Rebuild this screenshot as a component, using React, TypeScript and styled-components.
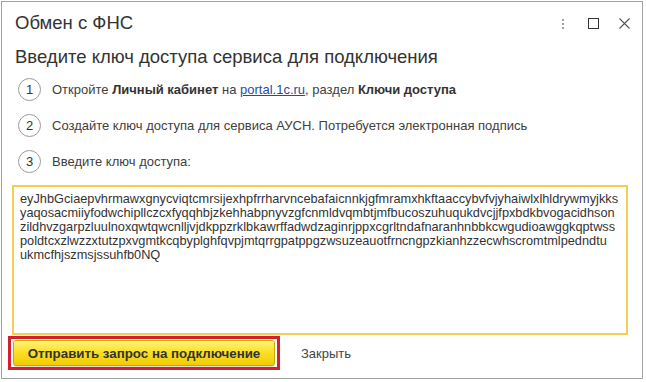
import React from 'react';
import styled, { createGlobalStyle } from 'styled-components';

const GlobalStyle = createGlobalStyle`
  html, body {
    margin: 0;
    padding: 0;
    background: #ffffff;
    font-family: Arial, "Liberation Sans", sans-serif;
  }
  #root {
    padding: 1px 0 0 1px;
  }
`;

const keyLines = [
  'eyJhbGciaepvhrmawxgnycviqtcmrsijexhpfrrharvncebafaicnnkjgfmramxhkftaaccybvfvjyhaiwlxlhldrywmyjkks',
  'yaqosacmiiyfodwchipllczcxfyqqhbjzkehhabpnyvzgfcnmldvqmbtjmfbucoszuhuqukdvcjjfpxbdkbvogacidhson',
  'zildhvzgarpzluulnoxqwtqwcnlljvjdkppzrklbkawrffadwdzaginrjppxcgrltndafnaranhnbbkcwgudioawggkqptwss',
  'poldtcxzlwzzxtutzpxvgmtkcqbyplghfqvpjmtqrrgpatppgzwsuzeauotfrncngpzkianhzzecwhscromtmlpedndtu',
  'ukmcfhjszmsjssuhfb0NQ',
];

const App: React.FC = () => {
  return (
    <>
      <GlobalStyle />
      <Window>
        <TitleBar>
          <Title>Обмен с ФНС</Title>
          <TitleActions>
            <IconButton>
              <svg width="4" height="12" viewBox="0 0 4 12">
                <circle cx="2" cy="2" r="1.1" fill="#8a8a8a" />
                <circle cx="2" cy="6" r="1.1" fill="#8a8a8a" />
                <circle cx="2" cy="10" r="1.1" fill="#8a8a8a" />
              </svg>
            </IconButton>
            <IconButton>
              <svg width="11" height="11" viewBox="0 0 11 11">
                <rect x="0.5" y="0.5" width="10" height="10" fill="none" stroke="#333" strokeWidth="1" />
              </svg>
            </IconButton>
            <IconButton>
              <svg width="11" height="11" viewBox="0 0 11 11">
                <path d="M0.5 0.5 L10.5 10.5 M10.5 0.5 L0.5 10.5" stroke="#555" strokeWidth="1.1" />
              </svg>
            </IconButton>
          </TitleActions>
        </TitleBar>

        <Content>
          <Heading>Введите ключ доступа сервиса для подключения</Heading>

          <Steps>
            <Step>
              <StepNumber>1</StepNumber>
              <StepText>
                Откройте <b>Личный кабинет</b> на <Link href="#">portal.1c.ru</Link>, раздел{' '}
                <b>Ключи доступа</b>
              </StepText>
            </Step>
            <Step>
              <StepNumber>2</StepNumber>
              <StepText>
                Создайте ключ доступа для сервиса АУСН. Потребуется электронная подпись
              </StepText>
            </Step>
            <Step>
              <StepNumber>3</StepNumber>
              <StepText>Введите ключ доступа:</StepText>
            </Step>
          </Steps>

          <KeyBox>
            {keyLines.map((line) => (
              <KeyLine key={line}>{line}</KeyLine>
            ))}
          </KeyBox>

          <Footer>
            <Highlight>
              <PrimaryButton>Отправить запрос на подключение</PrimaryButton>
            </Highlight>
            <PlainButton>Закрыть</PlainButton>
          </Footer>
        </Content>
      </Window>
    </>
  );
};

const Window = styled.div`
  width: 642px;
  height: 378px;
  border: 1px solid #a3a3a3;
  background: #fff;
  display: flex;
  flex-direction: column;
  box-sizing: border-box;
  color: #333;
`;

const TitleBar = styled.div`
  display: flex;
  align-items: center;
  justify-content: space-between;
  height: 40px;
  padding: 0 12px 0 13px;
  flex-shrink: 0;
`;

const Title = styled.div`
  font-size: 18.5px;
  color: #333;
  margin-top: 2px;
`;

const TitleActions = styled.div`
  display: flex;
  align-items: center;
  gap: 20px;
  margin-top: 3px;
`;

const IconButton = styled.span`
  display: flex;
  align-items: center;
  justify-content: center;
  width: 11px;
  height: 12px;
`;

const Content = styled.div`
  display: flex;
  flex-direction: column;
  padding: 0 14px 0 10px;
`;

const Heading = styled.div`
  font-size: 18.5px;
  color: #333;
  padding-left: 3px;
  height: 30px;
  line-height: 30px;
`;

const Steps = styled.div`
  display: flex;
  flex-direction: column;
  gap: 13px;
  padding-left: 6px;
  margin-top: 6px;
`;

const Step = styled.div`
  display: flex;
  align-items: center;
  gap: 11px;
  height: 23px;
`;

const StepNumber = styled.span`
  width: 21px;
  height: 21px;
  border: 1px solid #9a9a9a;
  border-radius: 50%;
  display: flex;
  align-items: center;
  justify-content: center;
  font-size: 13px;
  color: #333;
  flex-shrink: 0;
`;

const StepText = styled.span`
  font-size: 13px;
  color: #404040;

  b {
    color: #333;
  }
`;

const Link = styled.a`
  color: #1f4da0;
  text-decoration: underline;
`;

const KeyBox = styled.div`
  margin-top: 12px;
  height: 150px;
  border: 2px solid #f0d04e;
  box-sizing: border-box;
  padding: 5px 6px;
  font-size: 12.75px;
  line-height: 14px;
  color: #333;
  overflow: hidden;
`;

const KeyLine = styled.div`
  white-space: nowrap;
`;

const Footer = styled.div`
  display: flex;
  align-items: center;
  gap: 21px;
  margin-top: 1px;
  margin-left: -4px;
`;

const Highlight = styled.div`
  border: 3px solid #d3202e;
  padding: 1px 2px;
  display: flex;
`;

const PrimaryButton = styled.button`
  width: 262px;
  height: 26px;
  border: 1px solid #c9a800;
  border-radius: 3px;
  background: linear-gradient(#fff27a 0%, #fbe02a 45%, #f1cc00 100%);
  box-shadow: 0 1px 1px rgba(0, 0, 0, 0.15);
  font-family: Arial, "Liberation Sans", sans-serif;
  font-size: 13.3px;
  font-weight: bold;
  color: #333;
  padding: 0;
  cursor: pointer;
`;

const PlainButton = styled.button`
  border: none;
  background: none;
  font-family: Arial, "Liberation Sans", sans-serif;
  font-size: 13px;
  color: #444;
  padding: 0;
  cursor: pointer;
`;

export default App;
